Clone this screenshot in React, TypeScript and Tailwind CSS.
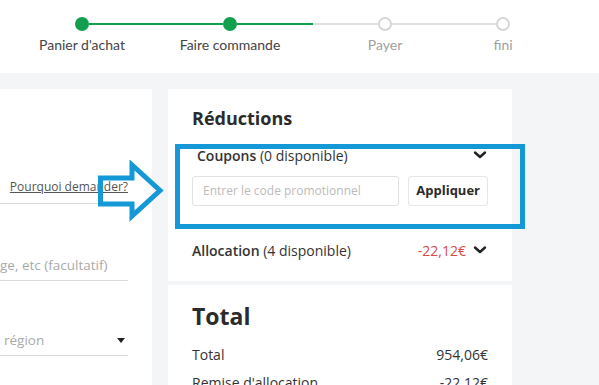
import React from "react";

const Chevron = () => (
  <svg width="14" height="10" viewBox="0 0 14 10" fill="none">
    <path d="M2 2.5 L7 7 L12 2.5" stroke="#222" strokeWidth="2.4" strokeLinecap="round" strokeLinejoin="round" />
  </svg>
);

export default function App() {
  const font = { fontFamily: '"Open Sans", "Noto Sans", sans-serif' };
  return (
    <div className="relative w-[599px] h-[385px] overflow-hidden bg-[#f4f5f7]" style={font}>
      {/* Header stepper */}
      <div className="h-[73px] bg-white pt-[17px]">
        <div className="flex items-center h-[14px]">
          <div className="w-[75px]" />
          <div className="w-[14px] h-[14px] rounded-full bg-[#12a04e]" />
          <div className="w-[134px] h-[2px] bg-[#12a04e]" />
          <div className="w-[14px] h-[14px] rounded-full bg-[#12a04e]" />
          <div className="w-[76px] h-[2px] bg-[#12a04e]" />
          <div className="w-[65px] h-[2px] bg-[#dedede]" />
          <div className="w-[14px] h-[14px] rounded-full border-2 border-[#d6d6d6] bg-white" />
          <div className="w-[104px] h-[2px] bg-[#dedede]" />
          <div className="w-[14px] h-[14px] rounded-full border-2 border-[#d6d6d6] bg-white" />
        </div>
        <div className="flex mt-[4px] text-[14px] leading-[20px] whitespace-nowrap" style={{ fontFamily: '"Lato", "Noto Sans", sans-serif' }}>
          <div className="w-[32px]" />
          <div className="w-[100px] flex justify-center text-[#444]">Panier d'achat</div>
          <div className="w-[48px]" />
          <div className="w-[100px] flex justify-center text-[#444]">Faire commande</div>
          <div className="w-[55px]" />
          <div className="w-[100px] flex justify-center text-[#a0a0a0]">Payer</div>
          <div className="w-[18px]" />
          <div className="w-[100px] flex justify-center text-[#a0a0a0]">fini</div>
        </div>
      </div>

      {/* Main */}
      <div className="flex pt-[16px] gap-[16px]">
        {/* Left panel */}
        <div className="w-[152px] h-[300px] bg-white pr-[24px] pt-[89px]">
          <div className="flex justify-end">
            <span className="text-[12px] leading-[18px] text-[#555] underline">Pourquoi demander?</span>
          </div>
          <div className="h-px bg-[#dcdcdc] mt-[7px]" />
          <div className="mt-[51px] flex justify-start overflow-hidden whitespace-nowrap text-[13.5px] leading-[20px] text-[#aaa]">
            <span>ge, etc (facultatif)</span>
          </div>
          <div className="h-px bg-[#dcdcdc] mt-[5px]" />
          <div className="mt-[49px] flex items-center justify-between whitespace-nowrap text-[13.5px] leading-[20px] text-[#aaa]">
            <span className="pl-[4px]">région</span>
            <svg width="8" height="5" viewBox="0 0 8 5" className="mr-[3px]">
              <path d="M0 0 L8 0 L4 5 Z" fill="#222" />
            </svg>
          </div>
          <div className="h-px bg-[#dcdcdc] mt-[5px]" />
        </div>

        {/* Right column */}
        <div className="w-[344px] flex flex-col gap-[4px]">
          <div className="h-[192px] bg-white px-[24px] pt-[16px]">
            <div className="text-[18px] leading-[26px] font-bold text-[#2b2b2b]">Réductions</div>
            <div className="mt-[14px] flex items-center justify-between pl-[5px] h-[20px]">
              <div className="text-[14px] text-[#333]">
                <span className="font-semibold">Coupons</span> (0 disponible)
              </div>
              <div className="mr-[1px]"><Chevron /></div>
            </div>
            <div className="mt-[11px] flex gap-[9px]">
              <div className="w-[208px] h-[30px] rounded-[3px] border border-[#e2e2e2] flex items-center pl-[10px] text-[12px] text-[#bbb]">
                Entrer le code promotionnel
              </div>
              <div className="w-[80px] h-[30px] rounded-[3px] border border-[#e6e6e6] flex items-center justify-center text-[13px] font-bold text-[#2b2b2b]">
                Appliquer
              </div>
            </div>
            <div className="mt-[34px] flex items-center justify-between h-[20px]">
              <div className="text-[14px] text-[#333]">
                <span className="font-semibold">Allocation</span> (4 disponible)
              </div>
              <div className="flex items-center gap-[7px]">
                <span className="text-[14px] text-[#dc4b45]">-22,12€</span>
                <div className="mr-[1px]"><Chevron /></div>
              </div>
            </div>
          </div>
          <div className="h-[120px] bg-white px-[24px] pt-[15px]">
            <div className="text-[23px] leading-[32px] font-bold text-[#2b2b2b]">Total</div>
            <div className="mt-[13px] flex justify-between text-[14px] leading-[20px] text-[#333]">
              <span>Total</span>
              <span>954,06€</span>
            </div>
            <div className="mt-[8px] flex justify-between text-[14px] leading-[20px] text-[#333]">
              <span>Remise d'allocation</span>
              <span>-22,12€</span>
            </div>
          </div>
        </div>
      </div>

      {/* Annotation overlays */}
      <div className="absolute left-[175px] top-[144px] w-[350px] h-[85px] border-[5px] border-[#1598d6]" />
      <svg className="absolute left-[94px] top-[160px]" width="74" height="62" viewBox="0 0 74 62" fill="none">
        <path
          d="M6.5 18 L38 18 L38 5 L66 30.5 L38 56 L38 44 L6.5 44 Z"
          stroke="#1598d6"
          strokeWidth="5"
          strokeLinejoin="miter"
          fill="none"
        />
      </svg>
    </div>
  );
}
